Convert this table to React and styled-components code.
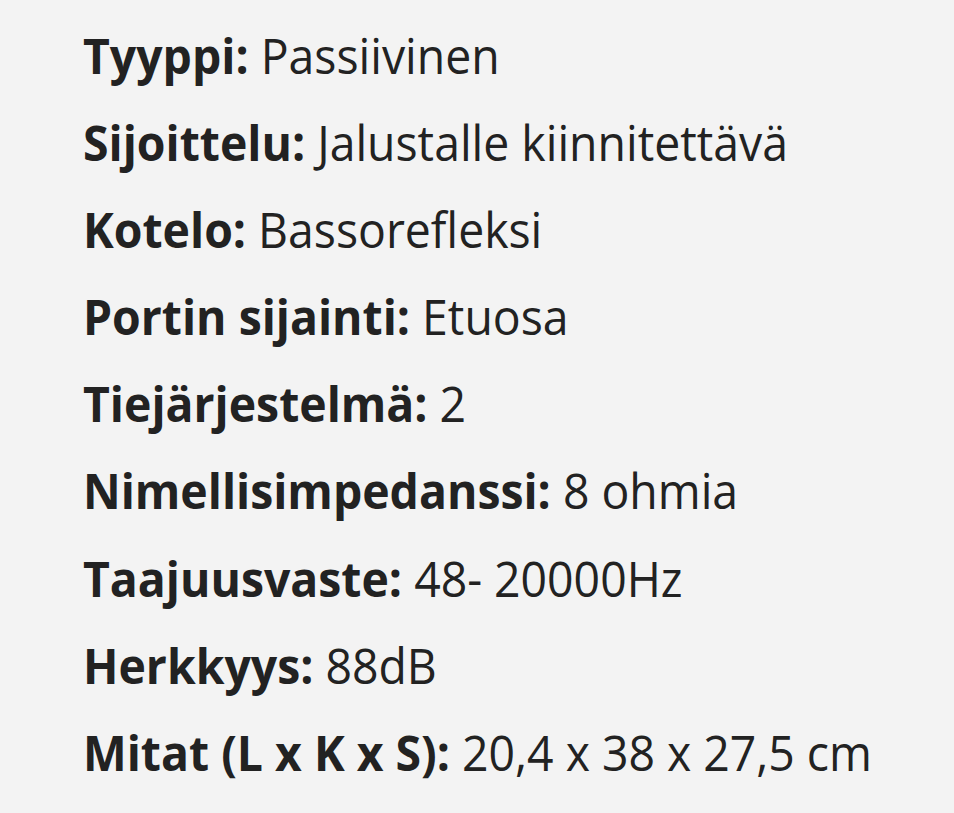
import styled, { createGlobalStyle } from "styled-components";

const Global = createGlobalStyle`
    html, body {
        margin: 0;
        padding: 0;
        background: #f3f3f3;
    }
`;

const specs = [
    ["Tyyppi:", "Passiivinen"],
    ["Sijoittelu:", "Jalustalle kiinnitettävä"],
    ["Kotelo:", "Bassorefleksi"],
    ["Portin sijainti:", "Etuosa"],
    ["Tiejärjestelmä:", "2"],
    ["Nimellisimpedanssi:", "8 ohmia"],
    ["Taajuusvaste:", "48- 20000Hz"],
    ["Herkkyys:", "88dB"],
    ["Mitat (L x K x S):", "20,4 x 38 x 27,5 cm"],
];

export default function App() {
    return (
        <>
            <Global />
            <Page>
                <List>
                    {specs.map(([label, value]) => (
                        <Row key={label}>
                            <Label>{label}</Label> {value}
                        </Row>
                    ))}
                </List>
            </Page>
        </>
    );
}

const Page = styled.div`
    width: 954px;
    height: 813px;
    overflow: hidden;
    background: #f3f3f3;
    padding: 12px 0 0 83px;
    box-sizing: border-box;
`;

// the screenshot's text is slightly condensed horizontally
const List = styled.div`
    display: flex;
    flex-direction: column;
    transform: scaleX(0.946);
    transform-origin: left top;
    font-family: "Open Sans", sans-serif;
    color: #222222;
`;

const Row = styled.div`
    font-size: 49px;
    line-height: 87.1px;
    height: 87.1px;
    white-space: nowrap;
`;

const Label = styled.span`
    font-weight: 700;
`;
